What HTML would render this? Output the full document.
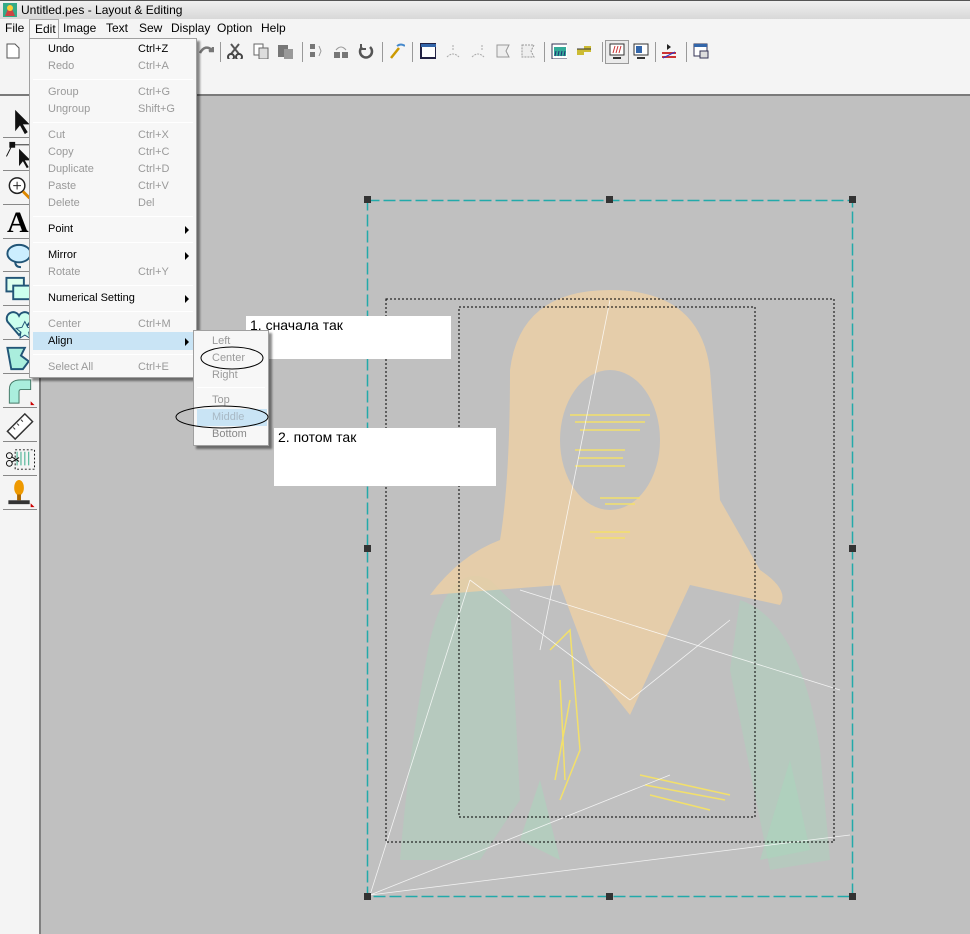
<!DOCTYPE html>
<html><head><meta charset="utf-8"><style>
*{margin:0;padding:0;box-sizing:border-box}
body{width:970px;height:934px;overflow:hidden;background:#c0c0c0;font-family:Tahoma,"Liberation Sans","DejaVu Sans",sans-serif;font-size:11px;position:relative}
.abs{position:absolute}
#title{left:0;top:0;width:970px;height:19px;background:linear-gradient(#f0f0f0,#d8d8d8);border-top:1px solid #555;font-size:12px;color:#000;padding:2px 0 0 21px}
#mb{left:0;top:19px;width:970px;height:19px;background:#f4f4f4;font-size:12px}
#mb span{position:absolute;top:2px}
#tb{left:0;top:38px;width:970px;height:58px;background:#f4f4f4;border-bottom:2px solid #7a7a7a}
#tb .sep{position:absolute;top:4px;width:1px;height:20px;background:#999}
#tb .ic{position:absolute;top:5px;width:16px;height:16px}
#left{left:0;top:96px;width:41px;height:838px;background:#f4f4f4;border-right:2px solid #808080}
.tool{position:absolute;left:3px;width:34px;height:32px;border-bottom:1px solid #888}
.menu{background:#f7f7f7;border:1px solid #a0a0a0;box-shadow:3px 3px 2px rgba(0,0,0,.45)}
.mi{position:absolute;left:18px;font-size:11px;color:#000}
.mi.g{color:#9a9a9a}
.sc{position:absolute;left:108px;font-size:11px}
.sp{position:absolute;left:3px;right:3px;height:1px;background:#a8a8a8;border-bottom:1px solid #fff}
.arr{position:absolute;left:155px;width:0;height:0;border-left:4px solid #000;border-top:4px solid transparent;border-bottom:4px solid transparent}
.note{background:#fff;font-family:"Liberation Sans",sans-serif;font-size:14px;color:#000;padding:1px 0 0 4px}
</style></head><body>
<div id="title" class="abs">Untitled.pes - Layout &amp; Editing</div>
<svg class="abs" style="left:2px;top:2px" width="16" height="16"><rect x="1" y="1" width="14" height="14" fill="#3a8"/><path d="M3 14L8 2L13 14Z" fill="#c44"/><circle cx="8" cy="6" r="3" fill="#fc3"/></svg>
<div id="mb" class="abs"><span style="left:5px">File</span><span style="left:34px">Edit</span><span style="left:63px">Image</span><span style="left:106px">Text</span><span style="left:139px">Sew</span><span style="left:171px">Display</span><span style="left:217px">Option</span><span style="left:261px">Help</span></div>
<div class="abs" style="left:29px;top:19px;width:30px;height:19px;border:1px solid #aaa;border-bottom:none;background:#f7f7f7;font-size:12px;padding:2px 0 0 5px">Edit</div>
<div id="tb" class="abs">
<svg class="ic" style="left:5px"><path d="M2 1h8l4 4v10H2z" fill="#fff" stroke="#555"/></svg>
<svg class="ic" style="left:198px"><path d="M2 10q5-9 12-3l-3 1h4v-4" fill="none" stroke="#777" stroke-width="2.5"/></svg>
<div class="sep" style="left:220px"></div>
<svg class="ic" style="left:227px" width="16" height="18"><path d="M4 1l8 10M12 1L4 11" stroke="#555" stroke-width="2"/><circle cx="4" cy="14" r="3" fill="none" stroke="#444" stroke-width="2"/><circle cx="12" cy="14" r="3" fill="none" stroke="#444" stroke-width="2"/></svg>
<svg class="ic" style="left:253px"><rect x="1" y="1" width="9" height="11" fill="#fff" stroke="#666"/><rect x="6" y="5" width="9" height="11" fill="#ddd" stroke="#666"/></svg>
<svg class="ic" style="left:277px"><rect x="1" y="2" width="10" height="12" fill="#777"/><rect x="7" y="6" width="9" height="10" fill="#999"/></svg>
<div class="sep" style="left:302px"></div>
<svg class="ic" style="left:308px"><rect x="2" y="1" width="5" height="5" fill="#777"/><rect x="2" y="9" width="5" height="5" fill="#777"/><path d="M11 3l2 5-2 5" fill="none" stroke="#999"/></svg>
<svg class="ic" style="left:333px"><rect x="1" y="9" width="6" height="6" fill="#777"/><rect x="9" y="9" width="6" height="6" fill="#777"/><path d="M3 7q5-6 10 0" fill="none" stroke="#999"/></svg>
<svg class="ic" style="left:358px"><path d="M12 4a6 6 0 1 1-8 0" fill="none" stroke="#555" stroke-width="2.5"/><path d="M3 1v5h5" fill="none" stroke="#555" stroke-width="2"/></svg>
<div class="sep" style="left:382px"></div>
<svg class="ic" style="left:389px"><path d="M2 15L10 5" stroke="#c90" stroke-width="2.5"/><path d="M8 3q4-3 8 0" fill="none" stroke="#48c" stroke-width="2"/></svg>
<div class="sep" style="left:412px"></div>
<svg class="ic" style="left:420px"><rect x="1" y="1" width="15" height="14" fill="#fff" stroke="#224" stroke-width="2"/><rect x="1" y="1" width="15" height="3" fill="#36a"/></svg>
<svg class="ic" style="left:445px"><path d="M2 14q6-6 12 0M8 2v5" fill="none" stroke="#aaa" stroke-dasharray="2 1"/></svg>
<svg class="ic" style="left:470px"><path d="M2 14q6-6 12 0M12 2v5" fill="none" stroke="#aaa" stroke-dasharray="2 1"/></svg>
<svg class="ic" style="left:495px"><path d="M2 2h12l-3 6 3 6H2z" fill="#eee" stroke="#999"/></svg>
<svg class="ic" style="left:520px"><path d="M2 2h12l-3 6 3 6H2z" fill="#eee" stroke="#999" stroke-dasharray="2 1"/></svg>
<div class="sep" style="left:544px"></div>
<svg class="ic" style="left:551px"><rect x="1" y="1" width="16" height="15" fill="#fff" stroke="#335"/><rect x="3" y="4" width="12" height="9" fill="#3a9"/><path d="M4 13l1-5M7 13l1-5M10 13l1-5M13 13l1-5" stroke="#237"/></svg>
<svg class="ic" style="left:576px"><rect x="1" y="6" width="7" height="6" fill="#cb3"/><rect x="8" y="3" width="7" height="6" fill="#cb3"/><path d="M1 6h14" stroke="#333"/></svg>
<div class="sep" style="left:602px"></div>
<div class="abs" style="left:605px;top:2px;width:24px;height:24px;border:1px solid #999;background:#eaeaea"></div>
<svg class="ic" style="left:609px"><rect x="1" y="1" width="14" height="11" fill="#fff" stroke="#333"/><path d="M4 10l2-7M7 10l2-7M10 10l2-7" stroke="#c33"/><path d="M4 15h8" stroke="#333" stroke-width="2"/></svg>
<svg class="ic" style="left:633px"><rect x="1" y="1" width="14" height="11" fill="#fff" stroke="#333"/><rect x="3" y="3" width="6" height="7" fill="#36a"/><path d="M4 15h8" stroke="#333" stroke-width="2"/></svg>
<div class="sep" style="left:655px"></div>
<svg class="ic" style="left:661px"><path d="M6 1v6l4-3z" fill="#222"/><path d="M1 10h14M1 14h14" stroke="#c33" stroke-width="2"/><path d="M2 15l12-6" stroke="#33c"/></svg>
<div class="sep" style="left:686px"></div>
<svg class="ic" style="left:693px"><rect x="1" y="1" width="13" height="12" fill="#fff" stroke="#335"/><rect x="1" y="1" width="13" height="3" fill="#36a"/><rect x="7" y="8" width="8" height="7" fill="#ddd" stroke="#335"/></svg>
</div>
<div id="left" class="abs">
<svg class="tool" style="top:10px" viewBox="0 0 34 32"><path d="M12 4v22l5-6 5 9 3-2-5-8h7z" fill="#111"/></svg>
<svg class="tool" style="top:43px" viewBox="0 0 34 32"><rect x="6" y="3" width="6" height="6" fill="#111"/><path d="M9 6l-6 12M9 6h20" stroke="#111"/><path d="M16 10v18l4-5 4 7 2-1-4-7h6z" fill="#111"/></svg>
<svg class="tool" style="top:77px" viewBox="0 0 34 32"><circle cx="14" cy="13" r="8" fill="#fff" stroke="#222" stroke-width="1.5"/><path d="M14 9v8M10 13h8" stroke="#222"/><path d="M20 19l7 7" stroke="#d80" stroke-width="3"/></svg>
<div class="tool" style="top:111px;font-family:'Liberation Serif',serif;font-size:30px;font-weight:bold;line-height:32px;padding-left:4px">A</div>
<svg class="tool" style="top:144px" viewBox="0 0 34 32"><ellipse cx="16" cy="14" rx="12" ry="9" fill="#cef" stroke="#257" stroke-width="2"/><path d="M12 22q0 6 6 6" fill="none" stroke="#257" stroke-width="2"/></svg>
<svg class="tool" style="top:178px" viewBox="0 0 34 32"><rect x="3" y="4" width="18" height="14" fill="#dfe" stroke="#257" stroke-width="2"/><rect x="10" y="12" width="22" height="14" fill="#cfe" stroke="#257" stroke-width="2"/></svg>
<svg class="tool" style="top:212px" viewBox="0 0 34 32"><path d="M16 28L4 14a6 6 0 0 1 12-6 6 6 0 0 1 12 6z" fill="#cfe" stroke="#257" stroke-width="2"/><path d="M22 14l3 6 6 1-5 4 1 6-5-3-5 3 1-6-5-4 6-1z" fill="#cfe" stroke="#257"/></svg>
<svg class="tool" style="top:246px" viewBox="0 0 34 32"><path d="M4 6h18l-4 8 8 6-6 8H8z" fill="#aed" stroke="#257" stroke-width="2"/></svg>
<svg class="tool" style="top:280px" viewBox="0 0 34 32"><path d="M6 28V14q0-10 12-10h10v10H18q-2 0-2 2v12z" fill="#aed" stroke="#476"/><path d="M28 26l4 4h-4z" fill="#c00"/></svg>
<svg class="tool" style="top:314px" viewBox="0 0 34 32"><path d="M4 22L22 4l8 8-18 18z" fill="#fff" stroke="#333" stroke-width="1.5"/><path d="M10 18l2 2M14 14l2 2M18 10l2 2" stroke="#333"/></svg>
<svg class="tool" style="top:348px" viewBox="0 0 34 32"><rect x="12" y="6" width="20" height="20" fill="none" stroke="#111" stroke-dasharray="2 2"/><path d="M14 8v14M18 8v14M22 8v14M26 8v14" stroke="#3a8"/><circle cx="6" cy="12" r="3" fill="none" stroke="#111"/><circle cx="6" cy="20" r="3" fill="none" stroke="#111"/><path d="M8 13l8 5M8 19l8-5" stroke="#111"/></svg>
<svg class="tool" style="top:382px" viewBox="0 0 34 32"><ellipse cx="16" cy="10" rx="5" ry="8" fill="#e90"/><rect x="14" y="17" width="4" height="6" fill="#a60"/><rect x="5" y="23" width="22" height="4" fill="#333"/><path d="M28 26l4 4h-4z" fill="#c00"/></svg>
</div>
<svg class="abs" style="left:43px;top:98px" width="927" height="836">
<g transform="translate(-43,-98)">
<path d="M430 640q20-80 60-60l20 20 10 200-40 60h-80q10-120 30-220zM740 600q60 20 80 150l10 110-60 10-40-200z" fill="#a8d8bc" opacity="0.4"/>
<path d="M520 840l20-60 20 80zM760 860l30-100 20 90z" fill="#a8d8bc" opacity="0.5"/>
<path d="M510 370q10-80 100-80 90 0 100 80l10 130 40 70q30 20 20 35l-90-20-60 130-40-50-30-80-130 10q30-40 70-55 10-60 10-170z" fill="#edd0a4" opacity="0.8"/>
<ellipse cx="610" cy="440" rx="50" ry="70" fill="#c0c0c0"/>
<g stroke="#f3e06a" stroke-width="1.5" fill="none">
<path d="M570 415h80M575 422h70M580 430h60M575 450h50M578 458h45M575 466h50M600 498h40M605 504h30M590 532h40M595 538h30"/>
<path d="M550 650l20-20 10 120-20 50M560 680l5 100M570 700l-15 80M640 775l90 20M645 785l80 15M650 795l60 15"/>
</g>
<path d="M370 895L470 580M370 895l480-60M610 300l-70 350M520 590l320 100M370 895l300-120M470 580l160 120M730 620l-100 80" stroke="#fff" stroke-width="0.8" fill="none" opacity="0.8"/>
<rect x="386" y="299" width="448" height="543" fill="none" stroke="#000" stroke-dasharray="2 2"/>
<rect x="459" y="307" width="296" height="510" fill="none" stroke="#000" stroke-dasharray="2 2"/>
<rect x="367.5" y="200.5" width="485" height="696" fill="none" stroke="#2aa" stroke-width="1.5" stroke-dasharray="12 4"/>
<g fill="#333"><rect x="364" y="196" width="7" height="7"/><rect x="606" y="196" width="7" height="7"/><rect x="849" y="196" width="7" height="7"/><rect x="364" y="545" width="7" height="7"/><rect x="849" y="545" width="7" height="7"/><rect x="364" y="893" width="7" height="7"/><rect x="606" y="893" width="7" height="7"/><rect x="849" y="893" width="7" height="7"/></g>
</g></svg>
<div class="abs note" style="left:246px;top:316px;width:205px;height:43px">1. сначала так</div>
<div class="abs note" style="left:274px;top:428px;width:222px;height:58px">2. потом так</div>
<div class="abs menu" style="left:29px;top:38px;width:168px;height:340px">
<div class="mi" style="top:4px">Undo</div><div class="sc" style="top:4px">Ctrl+Z</div>
<div class="mi g" style="top:21px">Redo</div><div class="mi g" style="left:108px;top:21px">Ctrl+A</div>
<div class="sp" style="top:40px"></div>
<div class="mi g" style="top:47px">Group</div><div class="mi g" style="left:108px;top:47px">Ctrl+G</div>
<div class="mi g" style="top:64px">Ungroup</div><div class="mi g" style="left:108px;top:64px">Shift+G</div>
<div class="sp" style="top:83px"></div>
<div class="mi g" style="top:90px">Cut</div><div class="mi g" style="left:108px;top:90px">Ctrl+X</div>
<div class="mi g" style="top:107px">Copy</div><div class="mi g" style="left:108px;top:107px">Ctrl+C</div>
<div class="mi g" style="top:124px">Duplicate</div><div class="mi g" style="left:108px;top:124px">Ctrl+D</div>
<div class="mi g" style="top:141px">Paste</div><div class="mi g" style="left:108px;top:141px">Ctrl+V</div>
<div class="mi g" style="top:158px">Delete</div><div class="mi g" style="left:108px;top:158px">Del</div>
<div class="sp" style="top:177px"></div>
<div class="mi" style="top:184px">Point</div><div class="arr" style="top:187px"></div>
<div class="sp" style="top:203px"></div>
<div class="mi" style="top:210px">Mirror</div><div class="arr" style="top:213px"></div>
<div class="mi g" style="top:227px">Rotate</div><div class="mi g" style="left:108px;top:227px">Ctrl+Y</div>
<div class="sp" style="top:246px"></div>
<div class="mi" style="top:253px">Numerical Setting</div><div class="arr" style="top:256px"></div>
<div class="sp" style="top:272px"></div>
<div class="mi g" style="top:279px">Center</div><div class="mi g" style="left:108px;top:279px">Ctrl+M</div>
<div class="abs" style="left:3px;top:293px;width:160px;height:18px;background:#c9e4f5"></div>
<div class="mi" style="top:296px">Align</div><div class="arr" style="top:299px"></div>
<div class="sp" style="top:315px"></div>
<div class="mi g" style="top:322px">Select All</div><div class="mi g" style="left:108px;top:322px">Ctrl+E</div>
</div>
<div class="abs menu" style="left:193px;top:330px;width:76px;height:116px">
<div class="mi g" style="left:18px;top:4px">Left</div>
<div class="mi g" style="left:18px;top:21px">Center</div>
<div class="mi g" style="left:18px;top:38px">Right</div>
<div class="sp" style="top:56px"></div>
<div class="mi g" style="left:18px;top:63px">Top</div>
<div class="abs" style="left:3px;top:78px;width:70px;height:17px;background:#c9e4f5"></div>
<div class="mi" style="left:18px;top:80px;color:#a8b8c4">Middle</div>
<div class="mi g" style="left:18px;top:97px;color:#888">Bottom</div>
</div>
<svg class="abs" style="left:170px;top:340px" width="110" height="90"><ellipse cx="62" cy="18" rx="31" ry="11" fill="none" stroke="#000"/><ellipse cx="52" cy="77" rx="46" ry="11" fill="none" stroke="#000"/></svg>
</body></html>
